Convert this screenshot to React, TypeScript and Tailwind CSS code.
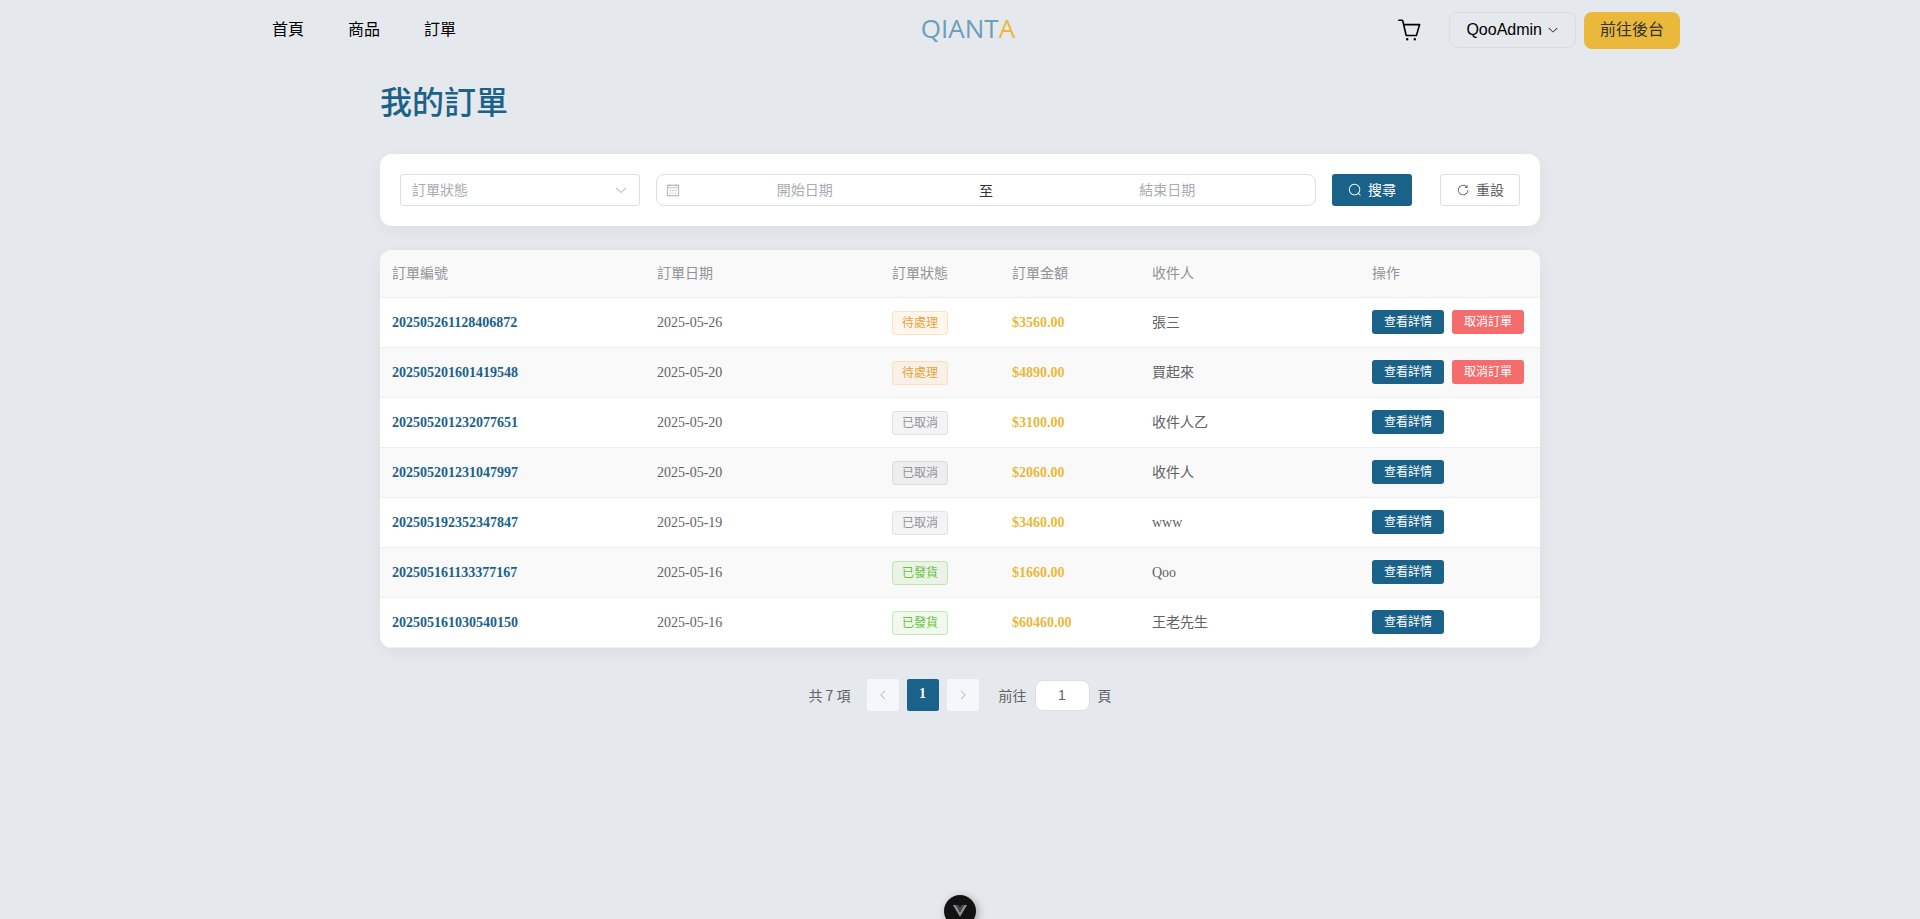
import React from "react";

const SANS = "font-['Liberation_Sans','Noto_Sans_CJK_TC',sans-serif]";
const CJK = "font-['Noto_Sans_CJK_TC',sans-serif]";

type Status = "pending" | "cancelled" | "shipped";

interface Order {
  id: string;
  date: string;
  status: Status;
  amount: string;
  recipient: string;
}

const orders: Order[] = [
  { id: "202505261128406872", date: "2025-05-26", status: "pending", amount: "$3560.00", recipient: "張三" },
  { id: "202505201601419548", date: "2025-05-20", status: "pending", amount: "$4890.00", recipient: "買起來" },
  { id: "202505201232077651", date: "2025-05-20", status: "cancelled", amount: "$3100.00", recipient: "收件人乙" },
  { id: "202505201231047997", date: "2025-05-20", status: "cancelled", amount: "$2060.00", recipient: "收件人" },
  { id: "202505192352347847", date: "2025-05-19", status: "cancelled", amount: "$3460.00", recipient: "www" },
  { id: "202505161133377167", date: "2025-05-16", status: "shipped", amount: "$1660.00", recipient: "Qoo" },
  { id: "202505161030540150", date: "2025-05-16", status: "shipped", amount: "$60460.00", recipient: "王老先生" },
];

const statusTag: Record<Status, { label: string; className: string }> = {
  pending: { label: "待處理", className: "border-[#ff9a1f]/20 bg-[#ff9a1f]/8 text-[#e6a23c]" },
  cancelled: { label: "已取消", className: "border-[#909399]/20 bg-[#909399]/10 text-[#909399]" },
  shipped: { label: "已發貨", className: "border-[#67c23a]/30 bg-[#67c23a]/10 text-[#67c23a]" },
};

const icons = {
  down: "M831.872 340.864 512 652.672 192.128 340.864a30.592 30.592 0 0 0-42.752 0 29.12 29.12 0 0 0 0 41.6L489.664 714.24a32 32 0 0 0 44.672 0l340.288-331.712a29.12 29.12 0 0 0 0-41.728 30.592 30.592 0 0 0-42.752 0z",
  search:
    "m795.904 750.72 124.992 124.928a32 32 0 0 1-45.248 45.248L750.656 795.904a416 416 0 1 1 45.248-45.248zM480 832a352 352 0 1 0 0-704 352 352 0 0 0 0 704",
  refresh:
    "M784.512 230.272v-50.56a32 32 0 1 1 64 0v149.056a32 32 0 0 1-32 32H667.52a32 32 0 1 1 0-64h92.992A320 320 0 1 0 524.8 833.152a320 320 0 0 0 320-320h64a384 384 0 0 1-384 384 384 384 0 0 1-384-384 384 384 0 0 1 643.712-282.88",
  calendar:
    "M128 384v512h768V192H768v32a32 32 0 1 1-64 0v-32H320v32a32 32 0 0 1-64 0v-32H128v128h768v64zm192-256h384V96a32 32 0 1 1 64 0v32h160a32 32 0 0 1 32 32v768a32 32 0 0 1-32 32H96a32 32 0 0 1-32-32V160a32 32 0 0 1 32-32h160V96a32 32 0 0 1 64 0zm-32 384h64a32 32 0 0 1 0 64h-64a32 32 0 0 1 0-64m0 192h64a32 32 0 1 1 0 64h-64a32 32 0 1 1 0-64m192-192h64a32 32 0 0 1 0 64h-64a32 32 0 0 1 0-64m0 192h64a32 32 0 1 1 0 64h-64a32 32 0 1 1 0-64m192-192h64a32 32 0 1 1 0 64h-64a32 32 0 1 1 0-64m0 192h64a32 32 0 1 1 0 64h-64a32 32 0 1 1 0-64",
};

function Icon({ path, className }: { path: string; className: string }) {
  return (
    <svg viewBox="0 0 1024 1024" fill="currentColor" aria-hidden="true" className={className}>
      <path d={path} />
    </svg>
  );
}

function Header() {
  return (
    <header className={`mx-auto flex h-[60px] max-w-[1440px] items-center text-base text-black ${SANS}`}>
      <nav className="flex flex-1 items-center">
        <a href="#home" className="mr-11 ml-8">
          首頁
        </a>
        <a href="#products" className="mr-11">
          商品
        </a>
        <a href="#orders">訂單</a>
      </nav>
      <a href="#home" className="ml-4 pb-1 font-['Open_Sans',sans-serif] text-[26px] leading-8 text-[#6b9fbc]">
        QIANT<span className="text-[#eab83a]">A</span>
      </a>
      <div className="flex flex-1 items-center justify-end gap-2">
        <button type="button" aria-label="購物車" className="mr-5">
          <svg
            viewBox="0 0 24 24"
            className="size-6"
            fill="none"
            stroke="currentColor"
            strokeWidth="1.6"
            strokeLinecap="round"
            strokeLinejoin="round"
          >
            <path d="M1.8 2.2h3.1q.7 0 .9.8L9.2 17.5h10.2L22.6 6.6H6.7" />
            <path d="M10.2 21.2h.01M17.8 21.2h.01" strokeWidth="2.4" />
          </svg>
        </button>
        <button type="button" className="flex h-9 items-center gap-[5px] rounded-lg border border-[#dcdcdc] px-4">
          QooAdmin
          <Icon path={icons.down} className="size-3" />
        </button>
        <button type="button" className="h-[37px] rounded-lg bg-[#eab83a] px-4 text-[#333]">
          前往後台
        </button>
      </div>
    </header>
  );
}

function Filters() {
  return (
    <form className={`flex items-center gap-4 rounded-xl bg-white p-5 text-sm shadow-[0_4px_16px_rgba(0,0,0,0.05)] ${CJK}`}>
      <div className="relative w-60">
        <select
          aria-label="訂單狀態"
          defaultValue=""
          className="block h-8 w-full appearance-none rounded-[3px] border border-[#dcdfe6] bg-white px-[11px] pb-[3px] text-[#a8abb2]"
        >
          <option value="">訂單狀態</option>
          <option value="pending">待處理</option>
          <option value="shipped">已發貨</option>
          <option value="cancelled">已取消</option>
        </select>
        <Icon path={icons.down} className="pointer-events-none absolute top-[9px] right-3 size-3.5 text-[#a8abb2]" />
      </div>
      <div className="flex h-8 flex-1 items-center rounded-lg border border-[#dcdfe6] px-[9px]">
        <Icon path={icons.calendar} className="size-3.5 text-[#a8abb2]" />
        <input
          aria-label="開始日期"
          placeholder="開始日期"
          className="w-[39%] pb-0.5 text-center outline-none placeholder:text-[#a8abb2]"
        />
        <span className="flex-1 text-center text-[#303133]">至</span>
        <input
          aria-label="結束日期"
          placeholder="結束日期"
          className="w-[39%] pb-0.5 text-center outline-none placeholder:text-[#a8abb2]"
        />
        <span className="size-3.5" />
      </div>
      <button
        type="button"
        className="mr-3 flex h-8 items-center gap-1.5 rounded-[3px] bg-[#1a6289] px-4 text-white"
      >
        <Icon path={icons.search} className="size-3.5" />
        <span className="pb-0.5">搜尋</span>
      </button>
      <button
        type="reset"
        className="flex h-8 items-center gap-1.5 rounded-[3px] border border-[#dcdfe6] bg-white px-[15px] text-[#606266]"
      >
        <Icon path={icons.refresh} className="size-3.5" />
        <span className="pb-0.5">重設</span>
      </button>
    </form>
  );
}

function OrderTable() {
  return (
    <div className="overflow-hidden rounded-xl bg-white shadow-[0_4px_16px_rgba(0,0,0,0.05)]">
      <table className="w-full table-fixed border-separate border-spacing-0 text-left font-['Liberation_Serif','Noto_Sans_CJK_TC',serif] text-sm text-[#606266]">
        <colgroup>
          <col className="w-[265px]" />
          <col />
          <col className="w-[120px]" />
          <col className="w-[140px]" />
          <col className="w-[220px]" />
          <col className="w-[180px]" />
        </colgroup>
        <thead>
          <tr className={`h-12 bg-[#f9f9f9] text-[#909399] ${CJK}`}>
            {["訂單編號", "訂單日期", "訂單狀態", "訂單金額", "收件人", "操作"].map((title) => (
              <th key={title} scope="col" className="border-b border-[#ebeef5] px-3 pb-[3px] font-normal">
                {title}
              </th>
            ))}
          </tr>
        </thead>
        <tbody className="[&_td]:border-b [&_td]:border-[#ebeef5] [&_td]:px-3">
          {orders.map((order) => (
            <tr key={order.id} className="h-[50px] even:bg-[#f9f9f9]">
              <td className="font-bold text-[#1a6289]">{order.id}</td>
              <td>{order.date}</td>
              <td>
                <span
                  className={`flex h-6 w-14 items-center justify-center rounded border text-xs ${statusTag[order.status].className}`}
                >
                  {statusTag[order.status].label}
                </span>
              </td>
              <td className="font-bold text-[#eab83a]">{order.amount}</td>
              <td>{order.recipient}</td>
              <td>
                <div className={`flex gap-2 pb-px text-xs text-white ${CJK}`}>
                  <button type="button" className="h-6 w-[72px] shrink-0 rounded-[3px] bg-[#1a6289] pb-0.5">
                    查看詳情
                  </button>
                  {order.status === "pending" && (
                    <button type="button" className="h-6 w-[72px] shrink-0 rounded-[3px] bg-[#f56c6c] pb-0.5">
                      取消訂單
                    </button>
                  )}
                </div>
              </td>
            </tr>
          ))}
        </tbody>
      </table>
    </div>
  );
}

function Pagination() {
  return (
    <nav aria-label="分頁" className={`flex items-center justify-center text-sm text-[#606266] ${CJK}`}>
      <span className="mr-4">共 7 項</span>
      <div className="flex gap-2">
        <button
          type="button"
          aria-label="上一頁"
          disabled
          className="flex size-8 items-center justify-center rounded-xs bg-[#f5f7fa] text-[#a8abb2]"
        >
          <Icon path={icons.down} className="size-3 rotate-90" />
        </button>
        <button
          type="button"
          aria-current="page"
          className="size-8 rounded-xs bg-[#1a6289] pb-0.5 font-['Liberation_Serif',serif] font-bold text-white"
        >
          1
        </button>
        <button
          type="button"
          aria-label="下一頁"
          disabled
          className="flex size-8 items-center justify-center rounded-xs bg-[#f5f7fa] text-[#a8abb2]"
        >
          <Icon path={icons.down} className="size-3 -rotate-90" />
        </button>
      </div>
      <label htmlFor="page" className="ml-5">
        前往
      </label>
      <input
        id="page"
        defaultValue="1"
        className={`mx-2 h-[31px] w-[55px] rounded-lg border border-[#dcdfe6] bg-white text-center ${SANS}`}
      />
      <span>頁</span>
    </nav>
  );
}

export default function App() {
  return (
    <div className="min-h-screen bg-[#e5e8ec]">
      <Header />
      <main className="mx-auto flex max-w-[1160px] flex-col pt-4">
        <h1 className={`mb-[30px] text-[32px] leading-12 font-medium text-[#1a6289] ${CJK}`}>我的訂單</h1>
        <Filters />
        <div className="mt-6 mb-[31px]">
          <OrderTable />
        </div>
        <Pagination />
      </main>
      <button
        type="button"
        aria-label="Devtools"
        className="fixed -bottom-2 left-1/2 flex size-8 -translate-x-1/2 items-center justify-center rounded-full bg-[#121212] shadow-[2px_2px_8px_rgba(0,0,0,0.3)]"
      >
        <svg viewBox="0 0 256 221" className="size-3.5" aria-hidden="true">
          <path fill="#8f8f8f" d="M0 0l128 220.8L256 0h-51.2L128 132.48 50.56 0z" />
          <path fill="#4a4a4a" d="M50.56 0 128 133.12 204.8 0h-47.36L128 51.2 97.92 0z" />
        </svg>
      </button>
    </div>
  );
}
